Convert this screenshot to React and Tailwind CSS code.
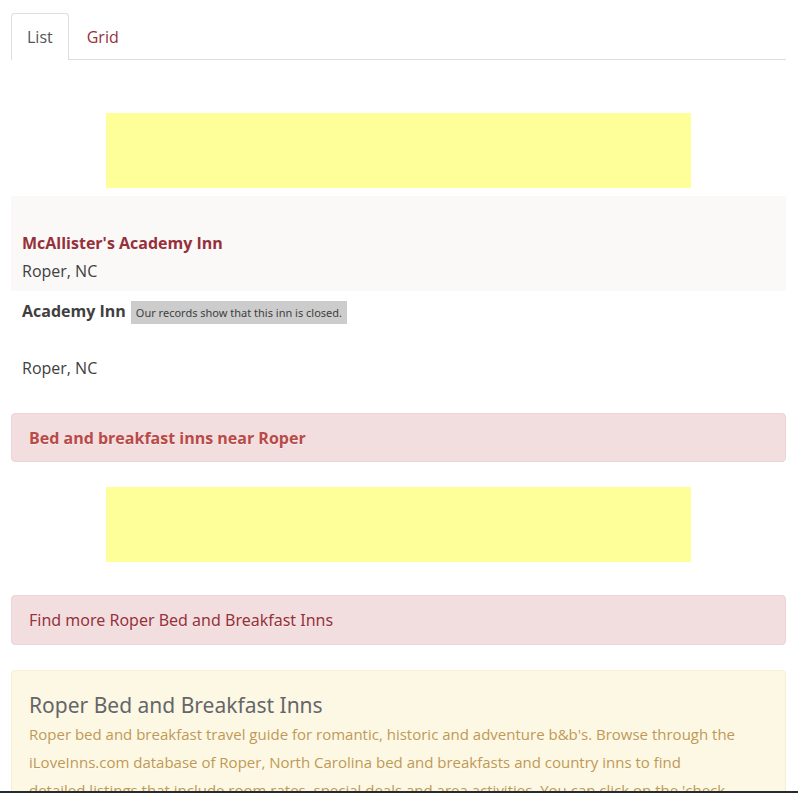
function AdSlot({ className }) {
  return <aside aria-label="Advertisement" className={`mx-auto h-[75px] w-full max-w-[585px] bg-[#ffff99] ${className}`} />;
}

export default function App() {
  return (
    <div className="bg-white px-[11px] pt-[13px] pr-3 font-['Open_Sans',sans-serif] text-base leading-7 text-[#404040]">
      <nav className="flex gap-0.5 border-b border-[#dddddd]">
        <a href="#list" aria-current="page" className="-mb-px rounded-t-[4px] border border-b-0 border-[#dddddd] bg-white px-[15px] pt-[9px] pb-[9px] text-[#555555]">
          List
        </a>
        <a href="#grid" className="border border-transparent border-b-0 px-[15px] pt-[9px] pb-2 text-[#96303b]">
          Grid
        </a>
      </nav>

      <main>
        <AdSlot className="mt-[53px]" />

        <article className="mt-2 bg-[#faf9f7] px-[11px] pt-[33px] pb-[6px]">
          <h2>
            <a href="#mcallisters" className="font-bold text-[#96303b]">McAllister's Academy Inn</a>
          </h2>
          <p>Roper, NC</p>
        </article>

        <article className="px-[11px] pt-[6px] pb-[31px]">
          <div className="flex items-center gap-[5px]">
            <h2 className="font-bold">Academy Inn</h2>
            <span className="mt-[3px] bg-[#cccccc] px-[5px] py-[3px] font-['Noto_Sans',sans-serif] text-[11px] leading-[17px]">Our records show that this inn is closed.</span>
          </div>
          <p className="mt-[29px]">Roper, NC</p>
        </article>

        <section className="rounded border border-[#eed3d7] bg-[#f2dede] px-[17px] pt-[10px] pb-[9px] text-[#b94a48]">
          <h2 className="font-bold [text-shadow:0_1px_0_rgba(255,255,255,0.5)]">Bed and breakfast inns near Roper</h2>
        </section>

        <AdSlot className="mt-[25px]" />

        <section className="mt-[33px] rounded border border-[#eed3d7] bg-[#f2dede] px-[17px] py-[10px]">
          <a href="#more" className="block font-['Noto_Sans',sans-serif] text-[#96303b] [text-shadow:0_1px_0_rgba(255,255,255,0.5)]">Find more Roper Bed and Breakfast Inns</a>
        </section>

        <section className="mt-[25px] rounded border border-[#fbeed5] bg-[#fcf8e3] px-[17px] pt-5 pb-5 text-[#c09853] [text-shadow:0_1px_0_rgba(255,255,255,0.5)]">
          <h1 className="font-['Noto_Sans',sans-serif] text-[21px] leading-[29px] text-[#666666]">Roper Bed and Breakfast Inns</h1>
          <p className="pr-8 text-[15px] leading-7">
            Roper bed and breakfast travel guide for romantic, historic and adventure b&amp;b's. Browse through the
            iLoveInns.com database of Roper, North Carolina bed and breakfasts and country inns to find detailed
            listings that include room rates, special deals and area activities. You can click on the 'check
          </p>
        </section>
      </main>

      <div className="fixed inset-x-0 bottom-0 h-0.5 bg-[#252b2e]" />
    </div>
  );
}
